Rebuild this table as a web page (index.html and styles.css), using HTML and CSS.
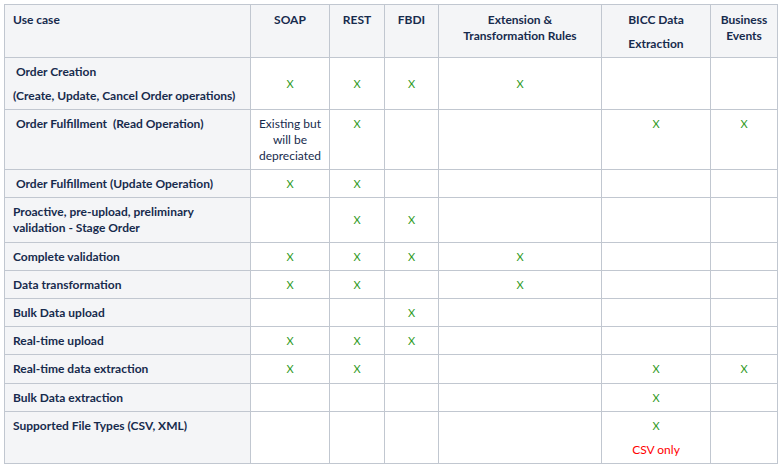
FILE: index.html
```html
<!DOCTYPE html>
<html lang="en">
<head>
<meta charset="utf-8">
<title>Use case matrix</title>
<link rel="stylesheet" href="styles.css">
</head>
<body>
<table class="matrix">
  <colgroup>
    <col class="c-use"><col class="c-soap"><col class="c-rest"><col class="c-fbdi"><col class="c-ext"><col class="c-bicc"><col class="c-biz">
  </colgroup>
  <thead>
    <tr class="head">
      <th class="hl">Use case</th>
      <th>SOAP</th>
      <th>REST</th>
      <th>FBDI</th>
      <th>Extension &amp;<br>Transformation Rules</th>
      <th><p>BICC Data</p><p>Extraction</p></th>
      <th>Business Events</th>
    </tr>
  </thead>
  <tbody>
    <tr>
      <th><p>&nbsp;Order Creation</p><p>(Create, Update, Cancel Order operations)</p></th>
      <td><span class="x">X</span></td>
      <td><span class="x">X</span></td>
      <td><span class="x">X</span></td>
      <td><span class="x">X</span></td>
      <td></td>
      <td></td>
    </tr>
    <tr class="top">
      <th>&nbsp;Order Fulfillment&nbsp; (Read Operation)</th>
      <td>Existing but will be depreciated</td>
      <td><span class="x">X</span></td>
      <td></td>
      <td></td>
      <td><span class="x">X</span></td>
      <td><span class="x">X</span></td>
    </tr>
    <tr>
      <th>&nbsp;Order Fulfillment (Update Operation)</th>
      <td><span class="x">X</span></td>
      <td><span class="x">X</span></td>
      <td></td>
      <td></td>
      <td></td>
      <td></td>
    </tr>
    <tr class="tall">
      <th>Proactive, pre-upload, preliminary validation - Stage Order</th>
      <td></td>
      <td><span class="x">X</span></td>
      <td><span class="x">X</span></td>
      <td></td>
      <td></td>
      <td></td>
    </tr>
    <tr>
      <th>Complete validation</th>
      <td><span class="x">X</span></td>
      <td><span class="x">X</span></td>
      <td><span class="x">X</span></td>
      <td><span class="x">X</span></td>
      <td></td>
      <td></td>
    </tr>
    <tr>
      <th>Data transformation</th>
      <td><span class="x">X</span></td>
      <td><span class="x">X</span></td>
      <td></td>
      <td><span class="x">X</span></td>
      <td></td>
      <td></td>
    </tr>
    <tr>
      <th>Bulk Data upload</th>
      <td></td>
      <td></td>
      <td><span class="x">X</span></td>
      <td></td>
      <td></td>
      <td></td>
    </tr>
    <tr>
      <th>Real-time upload</th>
      <td><span class="x">X</span></td>
      <td><span class="x">X</span></td>
      <td><span class="x">X</span></td>
      <td></td>
      <td></td>
      <td></td>
    </tr>
    <tr class="tall">
      <th>Real-time data extraction</th>
      <td><span class="x">X</span></td>
      <td><span class="x">X</span></td>
      <td></td>
      <td></td>
      <td><span class="x">X</span></td>
      <td><span class="x">X</span></td>
    </tr>
    <tr>
      <th>Bulk Data extraction</th>
      <td></td>
      <td></td>
      <td></td>
      <td></td>
      <td><span class="x">X</span></td>
      <td></td>
    </tr>
    <tr class="top">
      <th>Supported File Types (CSV, XML)</th>
      <td></td>
      <td></td>
      <td></td>
      <td></td>
      <td><p><span class="x">X</span></p><p class="note">CSV only</p></td>
      <td></td>
    </tr>
  </tbody>
</table>
</body>
</html>
```
FILE: styles.css
```css
html, body {
  margin: 0;
  padding: 0;
  background: #ffffff;
}

body {
  padding: 4px;
  font-family: Lato, "Open Sans", sans-serif;
  font-size: 12px;
  line-height: 16px;
  color: #172b4d;
}

.matrix {
  border-collapse: collapse;
  table-layout: fixed;
  width: 774px;
}

.c-use { width: 246px; }
.c-soap { width: 79px; }
.c-rest { width: 55px; }
.c-fbdi { width: 54px; }
.c-ext { width: 163px; }
.c-bicc { width: 109px; }
.c-biz { width: 67px; }

.matrix th,
.matrix td {
  border: 1px solid #c1c7d0;
  padding: 6px 8px 5px;
  line-height: 16px;
}

.matrix td {
  padding-left: 5px;
  padding-right: 5px;
  text-align: center;
  vertical-align: middle;
}

.matrix th {
  background: #f4f5f7;
  font-weight: 700;
  text-align: left;
  vertical-align: top;
}

.matrix .head th {
  text-align: center;
  padding-top: 7px;
  padding-left: 4px;
  padding-right: 4px;
}

.matrix .head th.hl {
  text-align: left;
  padding-left: 8px;
}

.matrix p {
  margin: 0;
}

.matrix p + p {
  margin-top: 8px;
}

.matrix .top td {
  vertical-align: top;
}

.matrix .tall th,
.matrix .tall td {
  padding-bottom: 6px;
}

.x {
  color: #2f9a1e;
  font-size: 11px;
}

.note {
  color: #ff0000;
}
```
